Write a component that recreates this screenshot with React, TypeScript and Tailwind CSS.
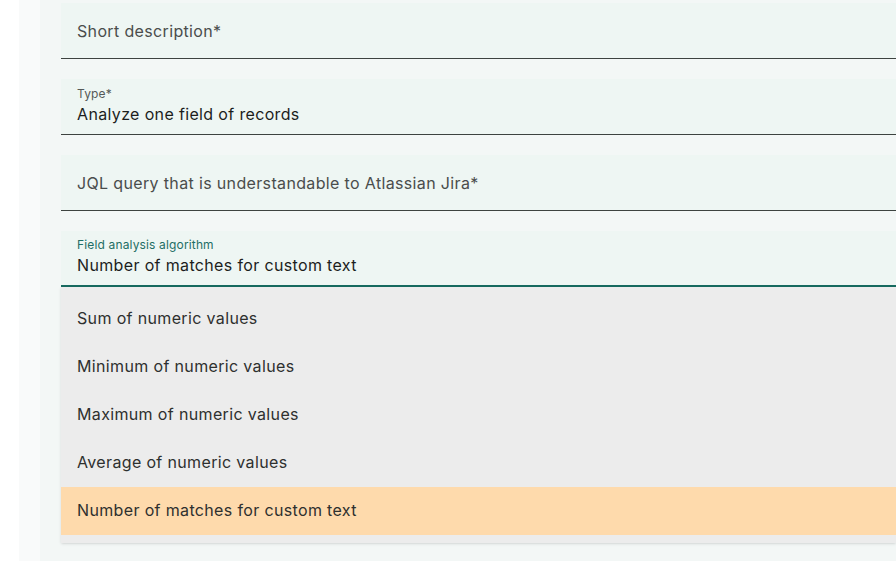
import React from 'react'

const options = [
  'Sum of numeric values',
  'Minimum of numeric values',
  'Maximum of numeric values',
  'Average of numeric values',
  'Number of matches for custom text',
]

const EmptyField = ({ label }: { label: string }) => (
  <div className="flex h-14 items-center border-b border-[#3d4340] bg-[#eef6f3] px-4 pt-[1px] text-[16px] tracking-[0.35px] text-[#4a4d4c]">
    {label}
  </div>
)

const FilledField = ({ label, value, active }: { label: string; value: string; active?: boolean }) => (
  <div
    className={`flex h-14 flex-col justify-center bg-[#eef6f3] px-4 pb-[2px] ${
      active ? 'border-b-2 border-[#176b60]' : 'border-b border-[#3d4340]'
    }`}
  >
    <span className={`text-[12px] leading-4 tracking-[0.15px] ${active ? 'text-[#1f6e65]' : 'text-[#555958]'}`}>
      {label}
    </span>
    <span className="text-[16px] leading-6 tracking-[0.35px] text-[#1c1e1d]">{value}</span>
  </div>
)

export default function App() {
  return (
    <div className="flex h-[561px] w-[896px] overflow-hidden bg-white font-['Inter',sans-serif]">
      <div className="w-[19px] shrink-0 bg-white" />
      <div className="w-[21px] shrink-0 bg-[#f9fafa]" />
      <div className="flex flex-1 flex-col gap-5 bg-[#f3f7f6] pl-[21px] pt-[3px]">
        <EmptyField label="Short description*" />
        <FilledField label="Type*" value="Analyze one field of records" />
        <EmptyField label="JQL query that is understandable to Atlassian Jira*" />
        <div className="relative">
          <FilledField label="Field analysis algorithm" value="Number of matches for custom text" active />
          <div className="absolute left-0 right-0 top-full h-[256px] overflow-hidden bg-[#ececec] pt-2 shadow-sm">
            {options.map((o, i) => (
              <div
                key={o}
                className={`flex h-12 items-center px-4 pb-[2px] text-[16px] tracking-[0.35px] text-[#2e302f] ${
                  i === options.length - 1 ? 'bg-[#fedaac]' : ''
                }`}
              >
                {o}
              </div>
            ))}
          </div>
        </div>
      </div>
    </div>
  )
}
